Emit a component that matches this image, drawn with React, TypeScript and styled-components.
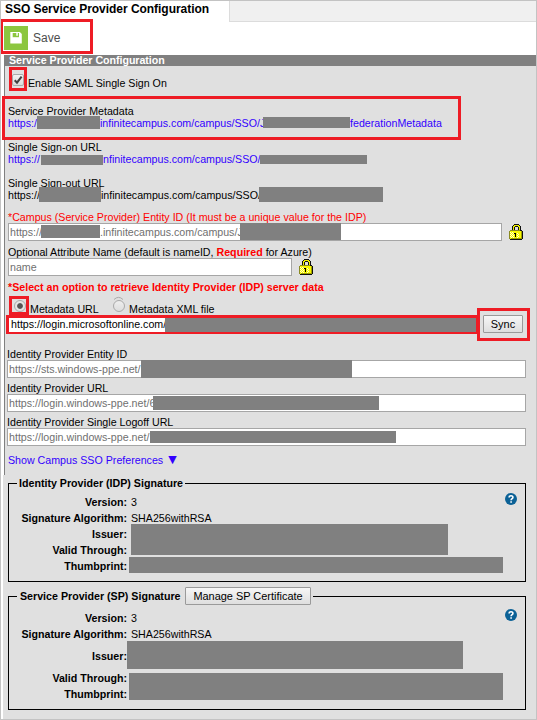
import React from "react";
import styled, { createGlobalStyle } from "styled-components";

const RED = "#ee1c25";
const MASK = "#808080";

const Global = createGlobalStyle`
  *, *::before { box-sizing: border-box; }
  body { margin: 0; background: #fff; }
`;

const Page = styled.div`
  width: 537px;
  height: 720px;
  border: 1px solid #c3c3c3;
  background: #fff;
  overflow: hidden;
  display: flex;
  flex-direction: column;
  font: 10.667px/12px "Liberation Sans", Arial, sans-serif;
  color: #000;
  white-space: pre;
`;

const TabBar = styled.div`
  display: flex;
  flex: none;
  height: 21px;
`;
const Tab = styled.div`
  width: 228px;
  padding: 1px 0 0 4px;
  font-size: 12px;
  font-weight: bold;
  letter-spacing: -0.04px;
  line-height: 14px;
`;
const TabFiller = styled.div`
  flex: 1;
  background: #f0f0f0;
  border-left: 1px solid #dcdcdc;
  border-bottom: 1px solid #dcdcdc;
`;

const Toolbar = styled.div`
  position: relative;
  flex: none;
  height: 33px;
  padding: 4px 0 0 3px;
`;
const SaveButton = styled.div`
  display: flex;
  align-items: center;
  gap: 5px;
  height: 24px;
  font-size: 12px;
  color: #4d4d4d;
`;

const Callout = styled.div<{ $l: number; $t: number; $w: number; $h: number; $b?: string }>`
  position: absolute;
  z-index: 2;
  left: ${p => p.$l}px;
  top: ${p => p.$t}px;
  width: ${p => p.$w}px;
  height: ${p => p.$h}px;
  border: solid ${RED};
  border-width: ${p => p.$b || "3px"};
  pointer-events: none;
`;

const Config = styled.section`
  flex: none;
  height: 420px;
  margin-left: 3px;
  border-left: 1px solid #808080;
  background: #e0e0e0;
`;
const SectionTitle = styled.h2`
  margin: 0;
  height: 11px;
  padding-left: 4px;
  background: #808080;
  color: #fff;
  font-size: 10.667px;
  letter-spacing: -0.04px;
  line-height: 10px;
`;
const Group = styled.div<{ $top: number; $left?: number }>`
  position: relative;
  margin-top: ${p => p.$top}px;
  margin-left: ${p => p.$left ?? 3}px;
`;
const Line = styled.div<{ $tone?: string; $bold?: boolean }>`
  display: flex;
  height: 12px;
  color: ${p => p.$tone || "#000"};
  font-weight: ${p => (p.$bold ? "bold" : "normal")};
`;
const Part = styled.span<{ $w?: number }>`
  flex: none;
  width: ${p => (p.$w ? `${p.$w}px` : "auto")};
`;
const Redacted = styled.span<{ $w: number; $h: number; $dy?: number }>`
  flex: none;
  width: ${p => p.$w}px;
  height: ${p => p.$h}px;
  margin-top: ${p => p.$dy || 0}px;
  background: ${MASK};
  z-index: 1;
`;
const Required = styled.b`
  color: #f00;
`;

const FieldRow = styled.div`
  display: flex;
  align-items: flex-start;
  gap: 7px;
  height: 18px;
`;
const Field = styled.div<{ $w: number }>`
  display: flex;
  align-items: flex-start;
  width: ${p => p.$w}px;
  height: 18px;
  border: 1px solid #a6a6a6;
  background: #fff;
  color: #707070;
  padding-left: 1px;
  & > ${Part} { margin-top: 2px; height: 13px; }
`;

const CheckRow = styled.div`
  position: relative;
  display: flex;
  gap: 4px;
  height: 24px;
  margin: 1px 0 0 7px;
`;
const CheckBox = styled.span`
  width: 12px;
  height: 12px;
  margin-top: 7px;
  border: 1px solid #aaa;
  border-radius: 2px;
  background: linear-gradient(#f2f2f2, #dcdcdc);
  svg { display: block; overflow: visible; }
`;
const CheckLabel = styled.span`
  margin-top: 10px;
`;

const RadioRow = styled.div`
  position: relative;
  display: flex;
  height: 19px;
  margin: 3px 0 0 9px;
`;
const Radio = styled.span<{ $on?: boolean }>`
  flex: none;
  width: 12px;
  height: 12px;
  margin-top: 4px;
  border: 1px solid #aaa;
  border-radius: 50%;
  background: ${p => (p.$on ? "radial-gradient(circle, #555 0 2.4px, #e4e4e4 3.3px)" : "linear-gradient(#eee, #ddd)")};
`;
const RadioLabel = styled.span<{ $w: number }>`
  flex: none;
  width: ${p => p.$w}px;
  margin: 7px 0 0 4px;
`;
const RadioArc = styled.svg`
  position: absolute;
  left: 99px;
  top: 0;
`;

const SyncRow = styled.div`
  position: relative;
  display: flex;
  height: 18px;
  margin-left: 4px;
`;
const SyncField = styled.div`
  display: flex;
  width: 467px;
  height: 14px;
  margin-top: 3px;
  padding-left: 2px;
  background: #fff;
`;
const Button = styled.button<{ $w: number }>`
  flex: none;
  width: ${p => p.$w}px;
  height: 18px;
  padding: 0;
  border: 1px solid #9a9a9a;
  border-radius: 1px;
  background: linear-gradient(#f6f6f6, #dedede);
  color: #000;
  font: 10.95px/14px "Liberation Sans", Arial, sans-serif;
`;
const SyncButton = styled(Button)`
  margin-left: 7px;
`;
const Preferences = styled.div`
  display: flex;
  align-items: center;
  gap: 5px;
  height: 12px;
  margin: 8px 0 0 3px;
  color: #30f;
`;
const Arrow = styled.span`
  font: 11px/12px "DejaVu Sans", sans-serif;
`;

const Signatures = styled.div`
  flex: 1;
  margin-left: 2px;
  padding: 8px 10px 0 5px;
  background: #e0e0e0;
`;
const SignatureBox = styled.section<{ $h: number; $gap?: number }>`
  position: relative;
  height: ${p => p.$h}px;
  margin-top: ${p => p.$gap || 0}px;
  border: 1px solid #000;
`;
const Legend = styled.div<{ $w: number; $pad: number }>`
  display: flex;
  align-items: center;
  justify-content: space-between;
  width: ${p => p.$w}px;
  height: 18px;
  margin: -10px 0 0 8px;
  padding: 0 2px 0 ${p => p.$pad}px;
  background: #e0e0e0;
  font-weight: bold;
`;
const Facts = styled.dl<{ $top: number }>`
  position: relative;
  display: grid;
  grid-template-columns: 118px 1fr;
  column-gap: 4px;
  margin: ${p => p.$top}px 0 0;
`;
const Term = styled.dt<{ $tall?: boolean }>`
  height: ${p => (p.$tall ? 28 : 16)}px;
  line-height: ${p => (p.$tall ? 28 : 16)}px;
  font-weight: bold;
  text-align: right;
`;
const Value = styled.dd`
  margin: 0;
  line-height: 16px;
`;
const Cover = styled.div<{ $l: number; $t: number; $w: number; $h: number }>`
  position: absolute;
  left: ${p => p.$l}px;
  top: ${p => p.$t}px;
  width: ${p => p.$w}px;
  height: ${p => p.$h}px;
  background: ${MASK};
`;
const HelpBadge = styled.svg<{ $top: number }>`
  position: absolute;
  right: 8px;
  top: ${p => p.$top}px;
`;

const SaveIcon = () => (
  <svg width="24" height="24" viewBox="0 0 24 24">
    <path fill="#8cc63f" d="M0 0h24v24H0z" />
    <path fill="#fff" d="M6.3 6h9.5l2 2v9.5H6.3z" />
    <path fill="#8cc63f" d="M8.7 7h6.3v4.2H8.7z" />
    <path fill="#fff" d="M12.3 7h1.5v2.8h-1.5z" />
  </svg>
);

const LockIcon = () => (
  <svg width="14" height="17" viewBox="0 0 14 17" shapeRendering="crispEdges">
    <path fill="#111" d="M5 1h5v1h1v1h1v5H3V3h1V2h1z" />
    <path fill="#ee0" d="M5 2h5v1h1v5H9V4H6v4H4V3h1z" />
    <path fill="#111" d="M6 3h3v1h1v4H5V4h1z" />
    <path fill="#ddd" d="M6 4h3v4H6z" />
    <path fill="#111" d="M1 7h12v1h1v8h-1v1H1v-1h12V8H1z" />
    <path fill="#8a8a20" d="M0 8h1v8H0zM1 7h10v1H1z" />
    <path fill="#f8f800" d="M1 8h11v8H1z" />
    <path fill="#fffdd0" d="M1 9h1v1H1zM3 9h1v1H3zM2 10h1v1H2zM4 10h1v1H4zM1 11h1v1H1zM3 11h1v1H3zM2 12h1v1H2zM4 12h1v1H4zM1 13h1v1H1zM3 13h1v1H3zM2 14h1v1H2zM4 14h1v1H4zM8 10h1v1H8zM9 11h1v1H9zM8 12h1v1H8zM9 13h1v1H9zM8 14h1v1H8z" />
    <path fill="#a0a000" d="M12 8h1v8h-1zM2 15h10v1H2z" />
    <path fill="#000" d="M5 10h2v4H6v-3H5z" />
  </svg>
);

const HelpIcon = ({ top }: { top: number }) => (
  <HelpBadge $top={top} width="12" height="12" viewBox="0 0 12 12">
    <circle cx="6" cy="6" r="6" fill="#0b6196" />
    <path d="M4.1 4.5C4.1 2.2 8 2.3 7.9 4.4C7.9 5.6 6.1 5.7 6.1 7.2" fill="none" stroke="#fff" strokeWidth="1.6" />
    <path fill="#fff" d="M5.3 8.2h1.6v1.6H5.3z" />
  </HelpBadge>
);

const LINK = "#30f";

export default function App() {
  return (
    <>
      <Global />
      <Page>
        <TabBar>
          <Tab>SSO Service Provider Configuration</Tab>
          <TabFiller />
        </TabBar>
        <Toolbar>
          <SaveButton><SaveIcon />Save</SaveButton>
          <Callout $l={0} $t={-3} $w={92} $h={35} $b="3px 3px 3px 2px" />
        </Toolbar>
        <Config>
          <SectionTitle>Service Provider Configuration</SectionTitle>
          <CheckRow>
            <CheckBox>
              <svg width="10" height="10" viewBox="0 0 10 10">
                <path d="M1.7 5.3L4 7.7L8.6 1.7" fill="none" stroke="#404040" strokeWidth="2" />
              </svg>
            </CheckBox>
            <CheckLabel>Enable SAML Single Sign On</CheckLabel>
            <Callout $l={-3} $t={0} $w={18} $h={24} />
          </CheckRow>

          <Group $top={14}>
            <Line>Service Provider Metadata</Line>
            <Line $tone={LINK}>
              <Part $w={29}>https:/</Part>
              <Redacted $w={63} $h={13} $dy={-1} />
              <Part $w={163}>infinitecampus.com/campus/SSO/J</Part>
              <Redacted $w={87} $h={11} />
              <Part>federationMetadata</Part>
            </Line>
            <Callout $l={-6} $t={-9} $w={459} $h={44} />
          </Group>
          <Group $top={12}>
            <Line>Single Sign-on URL</Line>
            <Line $tone={LINK}>
              <Part $w={33}>https://</Part>
              <Redacted $w={62} $h={10} $dy={2} />
              <Part $w={157}>nfinitecampus.com/campus/SSO/</Part>
              <Redacted $w={107} $h={9} $dy={2} />
            </Line>
          </Group>
          <Group $top={12}>
            <Line>Single Sign-out URL</Line>
            <Line>
              <Part $w={31}>https://</Part>
              <Redacted $w={62} $h={15} $dy={-2} />
              <Part $w={158}>infinitecampus.com/campus/SSO/</Part>
              <Redacted $w={124} $h={15} $dy={-2} />
            </Line>
          </Group>

          <Group $top={10}>
            <Line $tone="#f00">*Campus (Service Provider) Entity ID (It must be a unique value for the IDP)</Line>
            <FieldRow>
              <Field $w={494}>
                <Part $w={31}>https://</Part>
                <Redacted $w={59} $h={13} $dy={1} />
                <Part $w={140}>.infinitecampus.com/campus/J</Part>
                <Redacted $w={101} $h={17} $dy={-1} />
              </Field>
              <LockIcon />
            </FieldRow>
          </Group>
          <Group $top={5}>
            <Line>Optional Attribute Name (default is nameID, <Required>Required</Required> for Azure)</Line>
            <FieldRow>
              <Field $w={284}><Part>name</Part></Field>
              <LockIcon />
            </FieldRow>
          </Group>
          <Group $top={5}>
            <Line $tone="#f00" $bold>*Select an option to retrieve Identity Provider (IDP) server data</Line>
          </Group>
          <RadioRow>
            <Radio $on />
            <RadioLabel $w={83}>Metadata URL</RadioLabel>
            <RadioArc width="11" height="4" viewBox="0 0 11 4">
              <path d="M1 3.5Q5.5-.8 10 3.5" fill="none" stroke="#aaa" />
            </RadioArc>
            <Radio />
            <RadioLabel $w={100}>Metadata XML file</RadioLabel>
            <Callout $l={-5} $t={0} $w={20} $h={19} />
          </RadioRow>
          <SyncRow>
            <SyncField>
              <Part $w={154}>https://login.microsoftonline.com/</Part>
              <Redacted $w={311} $h={14} />
            </SyncField>
            <SyncButton $w={40}>Sync</SyncButton>
            <Callout $l={-3} $t={0} $w={473} $h={19} $b="3px 3px 2px" />
            <Callout $l={468} $t={-7} $w={53} $h={33} />
          </SyncRow>

          <Group $top={15} $left={2}>
            <Line>Identity Provider Entity ID</Line>
            <Field $w={519}>
              <Part $w={132}>https://sts.windows-ppe.net/</Part>
              <Redacted $w={211} $h={18} $dy={-1} />
            </Field>
          </Group>
          <Group $top={4} $left={2}>
            <Line>Identity Provider URL</Line>
            <Field $w={519}>
              <Part $w={144}>https://login.windows-ppe.net/6</Part>
              <Redacted $w={226} $h={14} $dy={1} />
            </Field>
          </Group>
          <Group $top={4} $left={2}>
            <Line>Identity Provider Single Logoff URL</Line>
            <Field $w={519}>
              <Part $w={141}>https://login.windows-ppe.net/</Part>
              <Redacted $w={246} $h={12} $dy={2} />
            </Field>
          </Group>
          <Preferences>Show Campus SSO Preferences<Arrow>▼</Arrow></Preferences>
        </Config>

        <Signatures>
          <SignatureBox $h={99}>
            <Legend $w={168} $pad={2}>Identity Provider (IDP) Signature</Legend>
            <Facts $top={2}>
              <Term>Version:</Term><Value>3</Value>
              <Term>Signature Algorithm:</Term><Value>SHA256withRSA</Value>
              <Term>Issuer:</Term><Value />
              <Term>Valid Through:</Term><Value />
              <Term>Thumbprint:</Term><Value />
              <Cover $l={122} $t={30} $w={317} $h={31} />
              <Cover $l={120} $t={63} $w={374} $h={16} />
            </Facts>
            <HelpIcon top={9} />
          </SignatureBox>
          <SignatureBox $h={114} $gap={14}>
            <Legend $w={296} $pad={3}>
              Service Provider (SP) Signature
              <Button $w={126}>Manage SP Certificate</Button>
            </Legend>
            <Facts $top={5}>
              <Term>Version:</Term><Value>3</Value>
              <Term>Signature Algorithm:</Term><Value>SHA256withRSA</Value>
              <Term $tall>Issuer:</Term><Value />
              <Term>Valid Through:</Term><Value />
              <Term>Thumbprint:</Term><Value />
              <Cover $l={118} $t={31} $w={336} $h={28} />
              <Cover $l={120} $t={63} $w={374} $h={27} />
            </Facts>
            <HelpIcon top={12} />
          </SignatureBox>
        </Signatures>
      </Page>
    </>
  );
}
